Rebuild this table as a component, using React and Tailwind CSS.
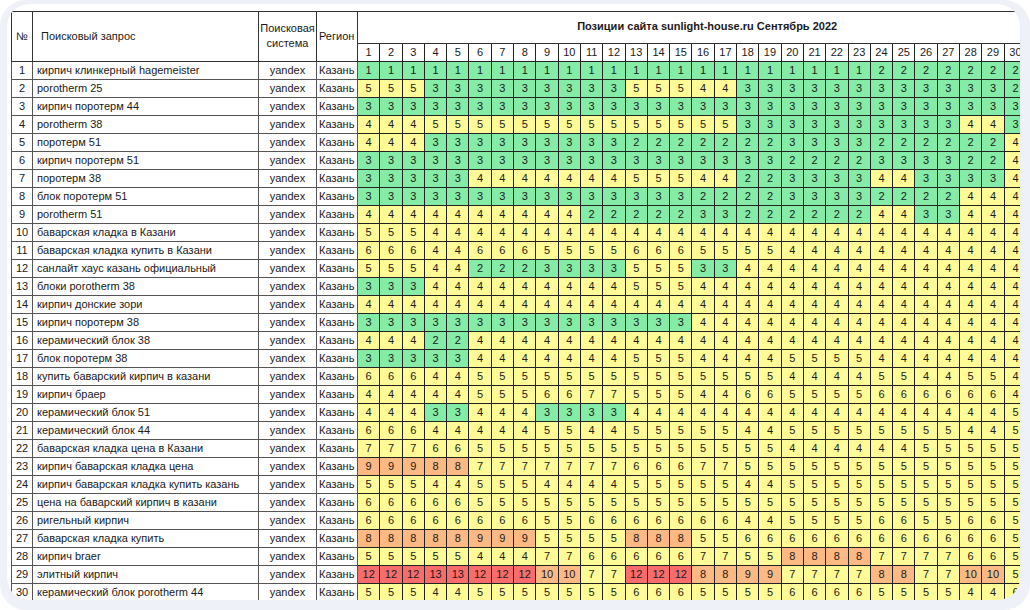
const rows = [
  ['кирпич клинкерный hagemeister', '1 1 1 1 1 1 1 1 1 1 1 1 1 1 1 1 1 1 1 1 1 1 1 2 2 2 2 2 2 2'],
  ['porotherm 25', '5 5 5 3 3 3 3 3 3 3 3 3 5 5 5 4 4 3 3 3 3 3 3 3 3 3 3 3 3 2'],
  ['кирпич поротерм 44', '3 3 3 3 3 3 3 3 3 3 3 3 3 3 3 3 3 3 3 3 3 3 3 3 3 3 3 3 3 3'],
  ['porotherm 38', '4 4 4 5 5 5 5 5 5 5 5 5 5 5 5 5 5 3 3 3 3 3 3 3 3 3 3 4 4 3'],
  ['поротерм 51', '4 4 4 3 3 3 3 3 3 3 3 3 2 2 2 2 2 2 2 3 3 3 3 2 2 2 2 2 2 4'],
  ['кирпич поротерм 51', '3 3 3 3 3 3 3 3 3 3 3 3 3 3 3 3 3 3 3 2 2 2 2 3 3 3 3 2 2 4'],
  ['поротерм 38', '3 3 3 3 3 4 4 4 4 4 4 4 5 5 5 4 4 2 2 3 3 3 3 4 4 3 3 3 3 4'],
  ['блок поротерм 51', '3 3 3 3 3 3 3 3 3 3 3 3 3 3 3 2 2 2 2 3 3 3 3 2 2 2 2 4 4 4'],
  ['porotherm 51', '4 4 4 4 4 4 4 4 4 4 2 2 2 2 2 3 3 2 2 2 2 2 2 4 4 3 3 4 4 4'],
  ['баварская кладка в Казани', '5 5 5 4 4 4 4 4 4 4 4 4 4 4 4 4 4 4 4 4 4 4 4 4 4 4 4 4 4 4'],
  ['баварская кладка купить в Казани', '6 6 6 4 4 6 6 6 5 5 5 5 6 6 6 5 5 5 5 4 4 4 4 4 4 4 4 4 4 4'],
  ['санлайт хаус казань официальный', '5 5 5 4 4 2 2 2 3 3 3 3 5 5 5 3 3 4 4 4 4 4 4 4 4 4 4 4 4 4'],
  ['блоки porotherm 38', '3 3 3 4 4 4 4 4 4 4 4 4 5 5 5 4 4 4 4 4 4 4 4 4 4 4 4 4 4 4'],
  ['кирпич донские зори', '4 4 4 4 4 4 4 4 4 4 4 4 4 4 4 4 4 4 4 4 4 4 4 4 4 4 4 4 4 4'],
  ['кирпич поротерм 38', '3 3 3 3 3 3 3 3 3 3 3 3 3 3 3 4 4 4 4 4 4 4 4 4 4 4 4 4 4 4'],
  ['керамический блок 38', '4 4 4 2 2 4 4 4 4 4 4 4 4 4 4 4 4 4 4 4 4 4 4 4 4 4 4 4 4 4'],
  ['блок поротерм 38', '3 3 3 3 3 4 4 4 4 4 4 4 5 5 5 4 4 4 4 5 5 5 5 4 4 4 4 4 4 4'],
  ['купить баварский кирпич в казани', '6 6 6 4 4 5 5 5 5 5 5 5 5 5 5 5 5 5 5 4 4 4 4 5 5 4 4 5 5 4'],
  ['кирпич браер', '4 4 4 4 4 5 5 5 6 6 7 7 5 5 5 4 4 6 6 5 5 5 5 6 6 6 6 6 6 4'],
  ['керамический блок 51', '4 4 4 3 3 4 4 4 3 3 3 3 4 4 4 4 4 4 4 4 4 4 4 4 4 4 4 4 4 5'],
  ['керамический блок 44', '6 6 6 4 4 4 4 4 5 5 4 4 5 5 5 5 5 4 4 5 5 5 5 5 5 5 5 4 4 5'],
  ['баварская кладка цена в Казани', '7 7 7 6 6 5 5 5 5 5 5 5 5 5 5 5 5 5 5 4 4 4 4 4 4 5 5 5 5 5'],
  ['кирпич баварская кладка цена', '9 9 9 8 8 7 7 7 7 7 7 7 6 6 6 7 7 5 5 5 5 5 5 5 5 5 5 5 5 5'],
  ['кирпич баварская кладка купить казань', '5 5 5 4 4 5 5 5 4 4 4 4 5 5 5 5 5 4 4 5 5 5 5 5 5 5 5 5 5 5'],
  ['цена на баварский кирпич в казани', '6 6 6 6 6 5 5 5 5 5 5 5 5 5 5 5 5 5 5 5 5 5 5 5 5 5 5 5 5 5'],
  ['ригельный кирпич', '6 6 6 6 6 6 6 6 5 5 6 6 6 6 6 6 6 4 4 5 5 5 5 6 6 5 5 6 6 5'],
  ['баварская кладка купить', '8 8 8 8 8 9 9 9 5 5 5 5 8 8 8 5 5 6 6 6 6 6 6 6 6 6 6 6 6 5'],
  ['кирпич braer', '5 5 5 5 5 4 4 4 7 7 6 6 6 6 6 7 7 5 5 8 8 8 8 7 7 7 7 6 6 5'],
  ['элитный кирпич', '12 12 12 13 13 12 12 12 10 10 7 7 12 12 12 8 8 9 9 7 7 7 7 8 8 7 7 10 10 5'],
  ['керамический блок porotherm 44', '5 5 5 4 4 5 5 5 5 5 5 5 6 6 6 5 5 5 5 6 6 6 6 5 5 5 5 4 4 6'],
]

const days = Array.from({ length: 30 }, (_, i) => i + 1)

// цвет ячейки по позиции
const cellColor = (v) => {
  if (v <= 3) return 'bg-[#84eca6]'
  if (v <= 7) return 'bg-[#fffc97]'
  if (v <= 11) return 'bg-[#fdb983]'
  return 'bg-[#f96c6c]'
}

export default function App() {
  return (
    <div className="w-[1030px] h-[610px] bg-white overflow-hidden">
      <div className="w-full h-full rounded-[26px] bg-[#eef1f8] pl-[7px] pt-[4px] pr-[10px] pb-[10px]">
        <div className="w-full h-full rounded-[22px] bg-white overflow-hidden pl-[4px] pt-[7px] shadow-[0_0_2px_rgba(0,0,0,0.04)]">
          <table
            className="table-fixed border-collapse w-[1015px] text-[11px] leading-none text-[#1a1a1a]"
            style={{ fontFamily: '"Liberation Sans", Arial, sans-serif' }}
          >
            <colgroup>
              <col className="w-[21px]" />
              <col className="w-[226px]" />
              <col className="w-[58px]" />
              <col className="w-[41px]" />
              {days.map((d) => (
                <col key={d} className="w-[22.3px]" />
              ))}
            </colgroup>
            <thead>
              <tr className="h-[32px]">
                <th rowSpan={2} className="border border-[#333] font-normal text-center align-middle p-0">№</th>
                <th rowSpan={2} className="border border-[#333] font-normal text-left align-middle pl-[8px]">Поисковый запрос</th>
                <th rowSpan={2} className="border border-[#333] font-normal text-center align-middle p-0 leading-[15px] pb-[2px]">
                  Поисковая
                  <br />
                  система
                </th>
                <th rowSpan={2} className="border border-[#333] font-normal text-left align-middle pl-[2px]">Регион</th>
                <th colSpan={30} className="border border-[#333] font-bold text-center align-middle pl-[30px] pb-[2px]">
                  Позиции сайта sunlight-house.ru Сентябрь 2022
                </th>
              </tr>
              <tr className="h-[18px]">
                {days.map((d) => (
                  <th key={d} className="border border-[#222] font-normal text-center p-0">{d}</th>
                ))}
              </tr>
            </thead>
            <tbody>
              {rows.map(([query, vals], i) => (
                <tr key={i} className="h-[18px]">
                  <td className="border border-[#555] text-center p-0">{i + 1}</td>
                  <td className="border border-[#555] pl-[4px] whitespace-nowrap overflow-hidden">{query}</td>
                  <td className="border border-[#555] text-center p-0">yandex</td>
                  <td className="border border-[#555] pl-[2px] whitespace-nowrap overflow-hidden">Казань</td>
                  {vals.split(' ').map((v, j) => (
                    <td key={j} className={`border border-[#222] text-center p-0 ${cellColor(Number(v))}`}>
                      {v}
                    </td>
                  ))}
                </tr>
              ))}
            </tbody>
          </table>
        </div>
      </div>
    </div>
  )
}
